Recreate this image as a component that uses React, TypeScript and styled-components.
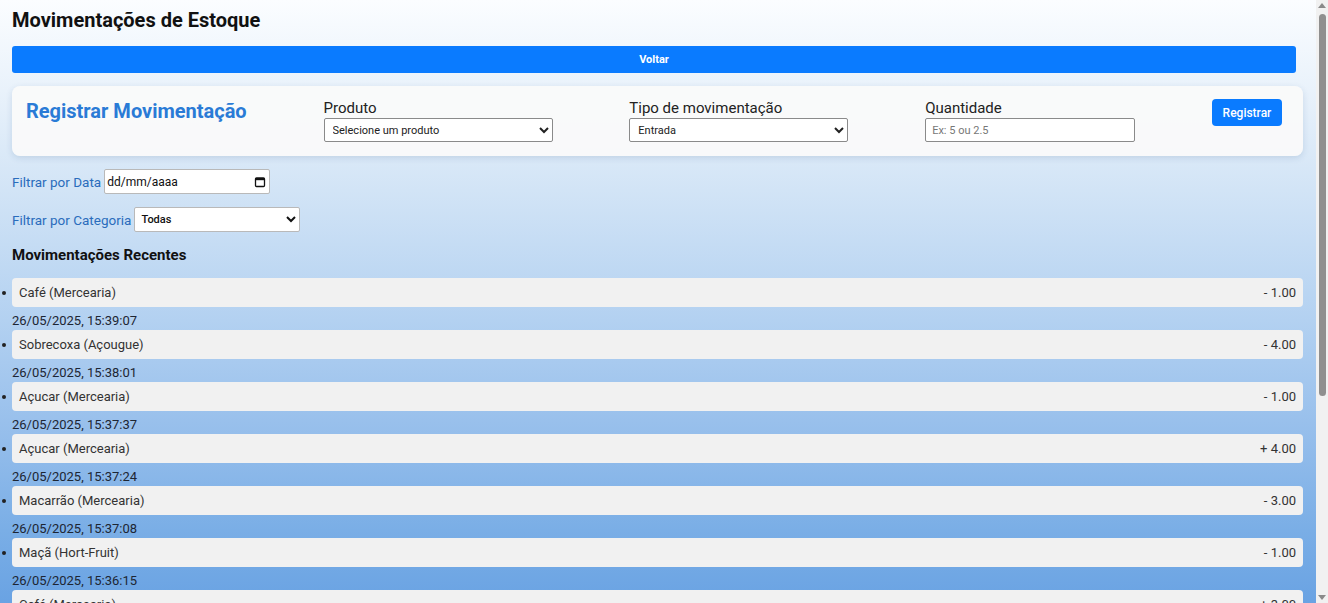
import React from "react";
import styled, { createGlobalStyle } from "styled-components";

const GlobalStyle = createGlobalStyle`
  html, body { margin: 0; padding: 0; }
  body {
    font-family: Roboto, "Noto Sans", Arial, sans-serif;
    color: #111;
    min-height: 100vh;
    background: linear-gradient(180deg, #fbfdff 0px, #e9f2fb 90px, #d2e4f6 190px, #b3d1f1 320px, #94bdeb 440px, #7aaee6 530px, #6aa3e3 600px, #5b98df 760px);
    background-repeat: no-repeat;
    background-color: #5b98df;
  }
`;

const Page = styled.div`
  display: flex;
  flex-direction: column;
  gap: 13px;
  padding: 8px 25px 24px 12px;
`;

const ScrollTrack = styled.div`
  position: fixed;
  top: 0;
  right: 0;
  width: 12px;
  height: 100vh;
  background: #f1f1f1;
  display: flex;
  flex-direction: column;
  align-items: center;
  justify-content: space-between;
  padding: 3px 0;
  box-sizing: border-box;
`;

const ScrollThumb = styled.div`
  position: absolute;
  top: 14px;
  left: 3px;
  width: 7px;
  height: 382px;
  border-radius: 4px;
  background: #8f8f8f;
`;

const Arrow = styled.div<{ $down?: boolean }>`
  width: 0;
  height: 0;
  border-left: 4px solid transparent;
  border-right: 4px solid transparent;
  ${(p) => (p.$down ? "border-top: 5px solid #8a8a8a;" : "border-bottom: 5px solid #8a8a8a;")}
`;

const Title = styled.h1`
  margin: 0 0 1px;
  font-size: 20px;
  line-height: 24px;
  font-weight: 700;
  color: #111;
`;

const BackButton = styled.button`
  height: 27px;
  margin-right: 7px;
  border: none;
  border-radius: 3px;
  background: #0a7bff;
  color: #fff;
  font-family: Roboto, Arial, sans-serif;
  font-size: 11px;
  font-weight: 700;
  cursor: pointer;
`;

const Card = styled.form`
  display: flex;
  align-items: flex-start;
  justify-content: space-between;
  padding: 13px 21px 14px 14px;
  background: rgba(250, 250, 250, 0.95);
  border-radius: 8px;
  box-shadow: 0 2px 6px rgba(40, 80, 130, 0.15);
`;

const CardTitle = styled.h2`
  margin: 0;
  font-size: 20px;
  line-height: 24px;
  font-weight: 700;
  color: #2a7bd6;
`;

const Field = styled.label`
  display: flex;
  flex-direction: column;
  gap: 1px;
  font-size: 15px;
  line-height: 18px;
  color: #222;
`;

const Select = styled.select<{ $w: number }>`
  width: ${(p) => p.$w}px;
  height: 24px;
  padding: 0 4px;
  font-family: Roboto, Arial, sans-serif;
  font-size: 11px;
  color: #222;
  background: #fff;
  border: 1px solid #8a8a8a;
  border-radius: 2px;
`;

const Input = styled.input<{ $w: number }>`
  box-sizing: border-box;
  width: ${(p) => p.$w}px;
  height: 24px;
  padding: 0 6px;
  font-family: Roboto, Arial, sans-serif;
  font-size: 11px;
  background: #fff;
  border: 1px solid #8a8a8a;
  border-radius: 2px;
  &::placeholder { color: #777; }
`;

const SubmitButton = styled.button`
  width: 70px;
  height: 27px;
  border: none;
  border-radius: 4px;
  background: #0a7bff;
  color: #fff;
  font-family: Roboto, Arial, sans-serif;
  font-size: 12px;
  font-weight: 500;
`;

const FilterRow = styled.div`
  display: flex;
  align-items: center;
  gap: 3px;
  font-size: 13.5px;
  color: #2a6cbc;
`;

const DateBox = styled.div`
  box-sizing: border-box;
  width: 166px;
  height: 25px;
  display: flex;
  align-items: center;
  justify-content: space-between;
  padding: 0 3px 0 2px;
  background: #fff;
  border: 1px solid #b9b9b9;
  border-radius: 2px;
  font-family: Roboto, Arial, sans-serif;
  font-size: 12px;
  color: #111;
`;

const FilterSelect = styled.select`
  width: 166px;
  height: 25px;
  padding: 0 2px;
  font-family: Roboto, Arial, sans-serif;
  font-size: 11px;
  font-weight: 500;
  color: #111;
  background: #fff;
  border: 1px solid #b9b9b9;
  border-radius: 2px;
`;

const SectionTitle = styled.h3`
  margin: 0;
  font-size: 15px;
  line-height: 20px;
  font-weight: 700;
  color: #111;
`;

const List = styled.ul`
  margin: 0;
  padding: 0;
  list-style: none;
`;

const Row = styled.li`
  position: relative;
  font-size: 13px;
  line-height: 29px;
  color: #222;
  &::before {
    content: "";
    position: absolute;
    left: -10px;
    top: 13px;
    width: 4px;
    height: 4px;
    border-radius: 50%;
    background: #222;
  }
`;

const ItemBox = styled.div`
  display: flex;
  justify-content: space-between;
  height: 29px;
  padding: 0 7px 0 7px;
  background: #f1f1f1;
  border-radius: 4px;
  color: #333;
`;

const DateLine = styled.div`
  margin: 6px 0 1px;
  line-height: 16px;
  color: #1d2633;
`;

const CalendarIcon = () => (
  <svg width="12" height="12" viewBox="0 0 12 12" aria-hidden="true">
    <rect x="1.5" y="2" width="9" height="8.5" rx="1" fill="none" stroke="#111" strokeWidth="1.3" />
    <rect x="1.5" y="2" width="9" height="2.2" fill="#111" />
  </svg>
);

const movements = [
  { name: "Café (Mercearia)", qty: "- 1.00", date: "26/05/2025, 15:39:07" },
  { name: "Sobrecoxa (Açougue)", qty: "- 4.00", date: "26/05/2025, 15:38:01" },
  { name: "Açucar (Mercearia)", qty: "- 1.00", date: "26/05/2025, 15:37:37" },
  { name: "Açucar (Mercearia)", qty: "+ 4.00", date: "26/05/2025, 15:37:24" },
  { name: "Macarrão (Mercearia)", qty: "- 3.00", date: "26/05/2025, 15:37:08" },
  { name: "Maçã (Hort-Fruit)", qty: "- 1.00", date: "26/05/2025, 15:36:15" },
  { name: "Café (Mercearia)", qty: "+ 3.00", date: "26/05/2025, 15:35:42" },
  { name: "Macarrão (Mercearia)", qty: "+ 5.00", date: "26/05/2025, 15:34:10" },
];

export default function App() {
  return (
    <>
      <GlobalStyle />
      <Page>
        <Title>Movimentações de Estoque</Title>
        <BackButton type="button">Voltar</BackButton>
        <Card onSubmit={(e) => e.preventDefault()}>
          <CardTitle>Registrar Movimentação</CardTitle>
          <Field>
            Produto
            <Select $w={229} defaultValue="">
              <option value="">Selecione um produto</option>
            </Select>
          </Field>
          <Field>
            Tipo de movimentação
            <Select $w={219} defaultValue="entrada">
              <option value="entrada">Entrada</option>
              <option value="saida">Saída</option>
            </Select>
          </Field>
          <Field>
            Quantidade
            <Input $w={210} placeholder="Ex: 5 ou 2.5" />
          </Field>
          <SubmitButton type="submit">Registrar</SubmitButton>
        </Card>
        <FilterRow>
          Filtrar por Data
          <DateBox>
            <span>dd/mm/aaaa</span>
            <CalendarIcon />
          </DateBox>
        </FilterRow>
        <FilterRow>
          Filtrar por Categoria
          <FilterSelect defaultValue="todas">
            <option value="todas">Todas</option>
          </FilterSelect>
        </FilterRow>
        <SectionTitle>Movimentações Recentes</SectionTitle>
        <List>
          {movements.map((m, i) => (
            <Row key={i}>
              <ItemBox>
                <span>{m.name}</span>
                <span>{m.qty}</span>
              </ItemBox>
              <DateLine>{m.date}</DateLine>
            </Row>
          ))}
        </List>
      </Page>
      <ScrollTrack aria-hidden="true">
        <Arrow />
        <ScrollThumb />
        <Arrow $down />
      </ScrollTrack>
    </>
  );
}
